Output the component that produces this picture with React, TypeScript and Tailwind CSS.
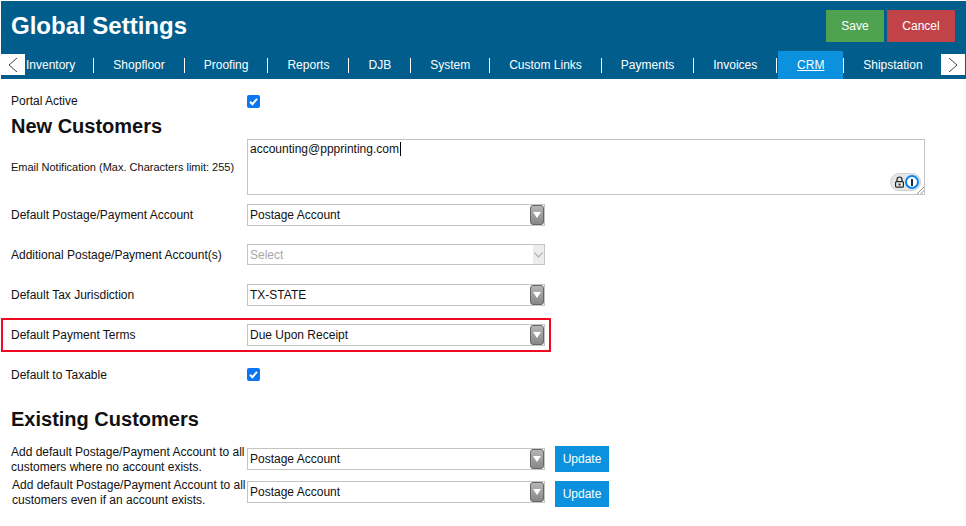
const tabs = ['Inventory', 'Shopfloor', 'Proofing', 'Reports', 'DJB', 'System', 'Custom Links', 'Payments', 'Invoices']

function Check() {
  return (
    <span className="w-[13px] h-[13px] rounded-[2px] bg-[#0b76f4] flex items-center justify-center">
      <svg width="11" height="11" viewBox="0 0 11 11" fill="none" stroke="#fff" strokeWidth="2">
        <path d="M2 5.8 L4.4 8.2 L9 2.8" />
      </svg>
    </span>
  )
}

function Select({ value }: { value: string }) {
  return (
    <div className="w-[298px] h-[22px] border border-[#c4c4c4] bg-white flex items-center justify-between pl-[2px] text-[12px] text-[#111]">
      <span>{value}</span>
      <span className="w-[14px] h-[20px] rounded-[3px] border border-[#666] bg-gradient-to-b from-[#b5b5b5] to-[#888] flex items-center justify-center">
        <svg width="8" height="6" viewBox="0 0 8 6"><path d="M0 0 H8 L4 6 Z" fill="#fff" /></svg>
      </span>
    </div>
  )
}

function DisabledSelect() {
  return (
    <div className="w-[298px] h-[21px] border border-[#c4c4c4] bg-white flex items-center justify-between pl-[2px] text-[12px] text-[#a8a8a8]">
      <span>Select</span>
      <span className="w-[11px] h-[19px] bg-[#ececec] flex items-center justify-center">
        <svg width="9" height="6" viewBox="0 0 9 6" fill="none" stroke="#b4b4b4" strokeWidth="1.2"><path d="M0.5 0.5 L4.5 5 L8.5 0.5" /></svg>
      </span>
    </div>
  )
}

function Row({ label, children, className, labelClass }: { label: string; children: React.ReactNode; className?: string; labelClass?: string }) {
  return (
    <div className={'flex items-center h-[23px] ' + (className ?? '')}>
      <div className={'w-[236px] shrink-0 text-[12px] text-[#111] ' + (labelClass ?? '')}>{label}</div>
      {children}
    </div>
  )
}

export default function App() {
  return (
    <div className="w-[966px] h-[526px] bg-white overflow-hidden pt-px pl-px font-['Liberation_Sans',Arial,sans-serif]">
      <div className="bg-[#005d8c] h-[78px] flex flex-col">
        <div className="h-[50px] flex justify-between pl-[10px] pr-[11px]">
          <h1 className="text-[24px] font-bold text-white leading-[50px]">Global Settings</h1>
          <div className="flex gap-[3px] pt-[9px]">
            <button className="w-[58px] h-[32px] bg-[#4fa24f] text-white text-[12px]">Save</button>
            <button className="w-[68px] h-[32px] bg-[#c14347] text-white text-[12px]">Cancel</button>
          </div>
        </div>
        <div className="h-[28px] flex items-center relative">
          <div className="flex items-center h-full pl-[25px]">
            {tabs.map((t, i) => (
              <div key={t} className={'flex items-center h-[15px] border-r border-white text-[12px] text-white whitespace-nowrap ' + (i === 0 ? 'pr-[18px]' : 'px-[19px]')}>
                {t}
              </div>
            ))}
            <div className="h-full w-[65px] ml-[1px] bg-[#0b91dd] flex items-center justify-center text-[12px] text-white underline">CRM</div>
            <div className="h-[15px] border-l border-white pl-[19px] flex items-center text-[12px] text-white whitespace-nowrap">Shipstation</div>
          </div>
          <button className="absolute left-0 top-[3px] w-[24px] h-[21px] bg-white flex items-center justify-center">
            <svg width="10" height="16" viewBox="0 0 10 16" fill="none" stroke="#444" strokeWidth="1"><path d="M9 1 L1 8 L9 15" /></svg>
          </button>
          <button className="absolute left-[940px] top-[3px] w-[24px] h-[21px] bg-white flex items-center justify-center">
            <svg width="10" height="16" viewBox="0 0 10 16" fill="none" stroke="#444" strokeWidth="1"><path d="M1 1 L9 8 L1 15" /></svg>
          </button>
        </div>
      </div>

      <div className="pl-[10px]">
        <Row label="Portal Active" className="mt-[11px]" labelClass="-mt-[2px]"><Check /></Row>
        <h2 className="text-[20px] font-bold text-[#111] leading-[24px] mt-[1px]">New Customers</h2>
        <div className="flex items-center h-[56px] mt-[1px]">
          <div className="w-[236px] shrink-0 text-[11px] text-[#111]">Email Notification (Max. Characters limit: 255)</div>
          <div className="relative w-[678px] h-full border border-[#c4c4c4] pl-[2px] pt-[1px] text-[12px] text-[#111] leading-[16px]">
            <span className="border-r border-black pr-px">accounting@ppprinting.com</span>
            <div className="absolute right-[3px] bottom-[3px] w-[31px] h-[18px] rounded-full bg-[#e6e6e6] border border-[#d0d0d0] flex items-center justify-between pl-[3px] pr-px">
              <svg width="11" height="12" viewBox="0 0 11 12">
                <path d="M3 5.5 V3.5 a2.5 2.5 0 0 1 5 0 V5.5" fill="none" stroke="#222" strokeWidth="1.2" />
                <rect x="1.6" y="5.6" width="7.8" height="5.6" rx="1" fill="#f4f4f4" stroke="#222" strokeWidth="1.2" />
                <rect x="4.5" y="7.5" width="2" height="2" fill="#222" />
              </svg>
              <span className="w-[14px] h-[14px] rounded-full bg-white border-[2.5px] border-[#0b84f0] flex items-center justify-center">
                <span className="w-[2px] h-[7px] bg-[#1a2a44]" />
              </span>
            </div>
            <svg className="absolute right-0 bottom-0" width="8" height="8" viewBox="0 0 8 8" stroke="#777" strokeWidth="0.8">
              <path d="M1 8 L8 1 M4.5 8 L8 4.5" />
            </svg>
          </div>
        </div>

        <Row label="Default Postage/Payment Account" className="mt-[8px]"><Select value="Postage Account" /></Row>
        <Row label="Additional Postage/Payment Account(s)" className="mt-[17px]"><DisabledSelect /></Row>
        <Row label="Default Tax Jurisdiction" className="mt-[17px]"><Select value="TX-STATE" /></Row>

        <div className="-ml-[10px] mt-[12px] w-[550px] h-[34px] border-2 border-[#ee0a20] flex items-center pl-[8px]">
          <div className="w-[236px] shrink-0 text-[12px] text-[#111]">Default Payment Terms</div>
          <Select value="Due Upon Receipt" />
        </div>

        <Row label="Default to Taxable" className="mt-[11px]"><Check /></Row>

        <h2 className="text-[20px] font-bold text-[#111] leading-[24px] mt-[21px]">Existing Customers</h2>

        <div className="flex items-center h-[26px] mt-[15px]">
          <div className="w-[240px] -mr-[4px] mt-[2px] shrink-0 text-[12px] leading-[15px] text-[#111]">Add default Postage/Payment Account to all customers where no account exists.</div>
          <Select value="Postage Account" />
          <button className="ml-[10px] w-[54px] h-[26px] bg-[#0b91dd] text-white text-[12px]">Update</button>
        </div>
        <div className="flex items-start h-[26px] mt-[9px]">
          <div className="w-[240px] -mr-[4px] -mt-[3px] pl-[1px] shrink-0 text-[12px] leading-[15px] text-[#111]">Add default Postage/Payment Account to all customers even if an account exists.</div>
          <Select value="Postage Account" />
          <button className="ml-[10px] w-[54px] h-[26px] bg-[#0b91dd] text-white text-[12px]">Update</button>
        </div>
      </div>
    </div>
  )
}
